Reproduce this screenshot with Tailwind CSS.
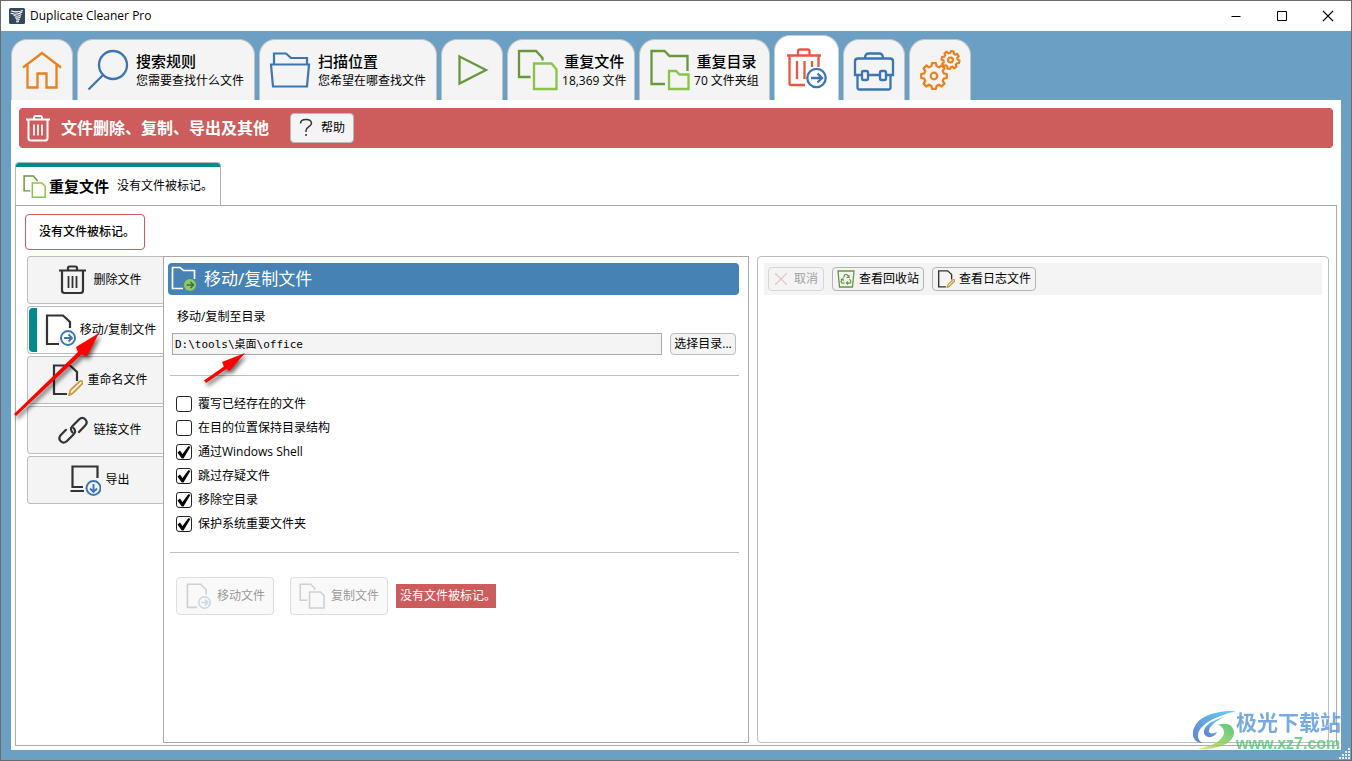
<!DOCTYPE html>
<html lang="zh-CN">
<head>
<meta charset="utf-8">
<title>Duplicate Cleaner Pro</title>
<script src="https://cdn.jsdelivr.net/npm/@tailwindcss/browser@4"></script>
</head>
<body class="font-['Open_Sans','Noto_Sans_CJK_SC',sans-serif] text-xs text-black">
<div class="relative flex min-h-screen flex-col overflow-hidden border border-[#6b6b6b] bg-[#6b9fc3]">

  <!-- Title bar -->
  <header class="flex h-[30px] items-center bg-white pl-2">
    <svg class="size-4" viewBox="0 0 16 16" fill="none" stroke="#fff" stroke-linecap="round">
      <rect width="16" height="16" rx="1.5" fill="#34495e" stroke="none"/>
      <path d="M2.500 3c2.500 1.300 8 1.200 11-.6M2 5.200c3.500 1.500 8 1.200 11-1.200M5 7.600c2.500 1 5.500.5 7-1M6.500 9.700c1.500.7 3.500.4 5-.8M7.500 11.700c1.200.5 2 .3 2.800-.3M7.500 13.700c1 .3 1.700 0 2-.5" stroke-width="1.100"/>
    </svg>
    <h1 class="ml-[5px] text-xs">Duplicate Cleaner Pro</h1>
    <div class="ml-auto flex">
      <button aria-label="最小化" class="grid h-[30px] w-[46px] place-items-center"><svg class="h-3 w-3" viewBox="0 0 12 12" stroke="#000"><path d="M1.500 6.500h9"/></svg></button>
      <button aria-label="最大化" class="grid h-[30px] w-[46px] place-items-center"><svg class="h-3 w-3" viewBox="0 0 12 12" fill="none" stroke="#000"><path d="M1.500 1.500h9v9h-9z"/></svg></button>
      <button aria-label="关闭" class="grid h-[30px] w-[46px] place-items-center"><svg class="h-3 w-3" viewBox="0 0 12 12" stroke="#000" stroke-width="1.100"><path d="M1 1l10 10M11 1L1 11"/></svg></button>
    </div>
  </header>

  <!-- Main tabs -->
  <nav class="flex h-[69px] shrink-0 items-end gap-1 px-2.5">
    <button aria-label="主页" class="grid h-[61px] w-[62px] place-items-center rounded-t-2xl border border-b-0 border-[#bfc4c8] bg-[#f4f4f4]">
      <svg class="h-10 w-10" viewBox="0 0 40 40" fill="none" stroke="#e8811e" stroke-width="2.300"><path d="M1 17.500L20 3l19 14.500M5.500 15v22.500H15.500V23.500h9v14h10V15"/></svg>
    </button>
    <button class="flex h-[61px] items-center gap-[7px] rounded-t-2xl border border-b-0 border-[#bfc4c8] bg-[#f4f4f4] pr-2.5 pl-[9px] text-left">
      <svg class="h-[42px] w-[42px]" viewBox="0 0 42 42" fill="none" stroke="#3b75b3" stroke-width="2.300"><circle cx="26" cy="16" r="14"/><path d="M16 26L1.500 40.500"/></svg>
      <span class="flex flex-col gap-0.5 pt-0.5 leading-[18px]"><b class="text-[15px] font-medium">搜索规则</b><span>您需要查找什么文件</span></span>
    </button>
    <button class="flex h-[61px] items-center gap-[7px] rounded-t-2xl border border-b-0 border-[#bfc4c8] bg-[#f4f4f4] pr-2.5 pl-[9px] text-left">
      <svg class="h-[42px] w-[42px]" viewBox="0 0 42 42" fill="none" stroke="#3b75b3" stroke-width="2.200"><path d="M2 15.500h38l-2 22H4zM5 15V4.500h12l5 4.500h16v6"/></svg>
      <span class="flex flex-col gap-0.5 pt-0.5 leading-[18px]"><b class="text-[15px] font-medium">扫描位置</b><span>您希望在哪查找文件</span></span>
    </button>
    <button aria-label="开始扫描" class="grid h-[61px] w-[62px] place-items-center rounded-t-2xl border border-b-0 border-[#bfc4c8] bg-[#f4f4f4]">
      <svg class="h-10 w-10" viewBox="0 0 40 40" fill="none" stroke="#6a963c" stroke-width="2.300"><path d="M7.500 6.500L34 20 7.500 33.500z"/></svg>
    </button>
    <button class="flex h-[61px] w-[128px] items-center gap-[3px] rounded-t-2xl border border-b-0 border-[#bfc4c8] bg-[#f4f4f4] pl-[9px] text-center">
      <svg class="h-[42px] w-[42px] shrink-0" viewBox="0 0 42 42" fill="none" stroke-width="2.300"><path stroke="#6a963c" d="M13.500 28H2V2h17l6.500 7v2.500"/><path stroke="#8bc34a" d="M17 14.500h17.500l5 6v19.500H17z"/></svg>
      <span class="flex flex-col gap-0.5 pt-0.5 leading-[18px]"><b class="text-[15px] font-medium">重复文件</b><span class="whitespace-nowrap">18,369 文件</span></span>
    </button>
    <button class="flex h-[61px] w-[131px] items-center gap-[3px] rounded-t-2xl border border-b-0 border-[#bfc4c8] bg-[#f4f4f4] pl-[9px] text-center">
      <svg class="h-[42px] w-[42px] shrink-0" viewBox="0 0 42 42" fill="none" stroke-width="2.300"><path stroke="#6a963c" d="M16 35H2.500V2h13l5 5H38.500v15"/><path stroke="#8bc34a" d="M20 22h7l3.500 3.500h9V40H20z"/></svg>
      <span class="flex flex-col gap-0.5 pt-0.5 leading-[18px]"><b class="text-[15px] font-medium">重复目录</b><span class="whitespace-nowrap">70 文件夹组</span></span>
    </button>
    <button aria-label="文件删除、复制、导出" aria-current="page" class="grid h-[65px] w-[65px] place-items-center rounded-t-2xl border border-b-0 border-[#c8ccd0] bg-white">
      <svg class="h-[42px] w-[42px]" viewBox="0 0 42 42" fill="none" stroke="#ea5741" stroke-width="2.300"><path d="M1 8.500h34M12 8V4.500c0-1.500.5-2 2-2h7.500c1.500 0 2 .5 2 2V8M3.500 9v27.500c0 1 .5 1.500 1.500 1.500h14M32.500 9v11M11 14v18M18.500 14v18M26 14v6"/><g stroke="#3b75b3"><circle cx="30.500" cy="31" r="9.200"/><path d="M25 31h10.500M31.500 26.500L36 31l-4.500 4.500"/></g></svg>
    </button>
    <button aria-label="工具箱" class="grid h-[61px] w-[62px] place-items-center rounded-t-2xl border border-b-0 border-[#bfc4c8] bg-[#f4f4f4]">
      <svg class="h-[42px] w-[42px]" viewBox="0 0 42 42" fill="none" stroke="#3b75b3" stroke-width="2.300"><path d="M9 26H2V12.500C2 10.500 3 9.500 5 9.500h32c2 0 3 1 3 3V26h-7M15 26h12M12 9c0-3 1.500-4.500 4-4.500h10c2.500 0 4 1.500 4 4.500M4.500 26v12.500c0 1.300.7 2 2 2h29c1.300 0 2-.7 2-2V26"/><rect x="9" y="22" width="6" height="9" rx="1.500"/><rect x="27" y="22" width="6" height="9" rx="1.500"/></svg>
    </button>
    <button aria-label="设置" class="grid h-[61px] w-[62px] place-items-center rounded-t-2xl border border-b-0 border-[#bfc4c8] bg-[#f4f4f4]">
      <svg class="h-[42px] w-[42px]" viewBox="0 0 42 42" fill="none" stroke="#e8811e" stroke-linejoin="round">
        <g transform="translate(15 27)" stroke-width="2.200"><path d="M9.700-2.600L12.800-2v4l-3.100.6C9.500 3.500 9 4.500 8.700 5l1.800 2.600-2.900 2.900L5 8.700C4.500 9 3.500 9.500 2.600 9.700L2 12.800h-4l-.6-3.100C-3.500 9.500-4.500 9-5 8.700l-2.600 1.800-2.900-2.900L-8.700 5C-9 4.500-9.500 3.500-9.700 2.600L-12.800 2v-4l3.100-.6C-9.500-3.500-9-4.500-8.700-5l-1.800-2.600 2.900-2.900L-5-8.700C-4.500-9-3.500-9.500-2.600-9.700L-2-12.800h4l.6 3.100C3.500-9.500 4.500-9 5-8.700l2.600-1.800 2.900 2.900L8.700-5c.3.500.8 1.500 1 2.400z"/><circle r="3.300"/></g>
        <g transform="translate(31.500 11) rotate(12) scale(.7)" stroke-width="3"><path d="M9.700-2.600L12.800-2v4l-3.100.6C9.500 3.500 9 4.500 8.700 5l1.800 2.600-2.900 2.900L5 8.700C4.500 9 3.500 9.500 2.600 9.700L2 12.800h-4l-.6-3.100C-3.500 9.500-4.500 9-5 8.700l-2.600 1.800-2.900-2.900L-8.700 5C-9 4.500-9.500 3.500-9.700 2.600L-12.800 2v-4l3.100-.6C-9.500-3.500-9-4.500-8.700-5l-1.800-2.600 2.900-2.900L-5-8.700C-4.500-9-3.500-9.500-2.600-9.700L-2-12.800h4l.6 3.100C3.500-9.500 4.500-9 5-8.700l2.600-1.800 2.900 2.900L8.700-5c.3.500.8 1.500 1 2.400z"/><circle r="3.500"/></g>
      </svg>
    </button>
  </nav>

  <main class="mx-2.5 mb-2.5 flex flex-1 flex-col bg-white px-1 pt-2 pb-1">
    <!-- Section banner -->
    <div class="mx-1 flex h-10 items-center rounded bg-[#cd5c5c] pl-1.5">
      <svg class="h-7 w-[26px]" viewBox="0 0 26 28" fill="none" stroke="#fff" stroke-width="2"><path d="M1 5.500h24M9 5V3.500c0-1 .5-1.500 1.500-1.500h5c1 0 1.500.5 1.500 1.500V5M3.500 6v18c0 1.500 1 2.500 2.500 2.500h14c1.500 0 2.500-1 2.500-2.500V6"/><path stroke-width="1.700" d="M9 10.500v11M13 10.500v11M17 10.500v11"/></svg>
      <h2 class="ml-2.5 text-base font-bold text-white">文件删除、复制、导出及其他</h2>
      <button class="ml-[21px] flex h-[30px] w-16 items-center justify-center gap-2 rounded border border-[#b9b9b9] bg-[#f4f4f4]">
        <svg class="h-5 w-3.5" viewBox="0 0 14 20" fill="none" stroke="#333" stroke-width="1.500"><path d="M1.500 5.500C1.500 2.500 4 1.500 7 1.500s5.500 1.500 5.500 4c0 3-5.500 3.500-5.500 7v1.500M7 16v2"/></svg>帮助
      </button>
    </div>

    <!-- Document tab -->
    <div class="mt-3.5 flex" role="tablist">
      <button role="tab" aria-selected="true" class="flex h-[43px] w-[206px] flex-col overflow-hidden rounded-t border border-b-0 border-[#b4b4b4]">
        <span class="h-1 w-full bg-[#008b8b]"></span>
        <span class="flex w-full flex-1 items-center pl-[7px]">
          <svg class="mr-[3px] h-[23px] w-[23px]" viewBox="0 0 42 42" fill="none" stroke-width="2.700"><path stroke="#6a963c" d="M13.500 29H2V2h17l6.500 7v2.500"/><path stroke="#8bc34a" d="M17 14.500h17.500l6 6v20H17z"/></svg>
          <b class="mr-2 text-[15px] font-bold">重复文件</b><span>没有文件被标记。</span>
        </span>
      </button>
    </div>

    <section class="flex flex-1 flex-col border border-[#a9a9a9] pt-2 pb-0.5">
      <button class="ml-[9px] h-9 w-[120px] rounded border border-[#cd5c5c] pl-1 font-medium">没有文件被标记。</button>

      <div class="mt-1.5 flex flex-1 pr-[7px] pl-[11px]">
        <!-- Action list -->
        <div class="flex w-[136px] shrink-0 flex-col gap-0.5">
          <button class="flex h-12 items-center justify-center gap-1 rounded-l border border-r-0 border-[#bdbdbd] bg-[#f4f4f4] pl-2">
            <svg class="size-8" viewBox="0 0 32 32" fill="none" stroke="#333" stroke-width="2.200"><path d="M2 6.500h27M11 6V4c0-1 .5-1.500 1.500-1.500h6c1 0 1.500.5 1.500 1.500v2M5 7v19.500c0 1.500 1 2.500 2.500 2.500h16c1.500 0 2.500-1 2.500-2.500V7"/><path stroke-width="1.800" d="M11.500 12v12M15.500 12v12M19.500 12v12"/></svg>删除文件
          </button>
          <button aria-current="true" class="flex h-12 rounded-l border border-r-0 border-[#bdbdbd] bg-white py-px pl-px">
            <span class="h-full w-2 rounded-l bg-[#008b8b]"></span>
            <span class="flex h-full flex-1 items-center justify-center gap-1">
              <svg class="size-8" viewBox="0 0 32 32" fill="none" stroke="#333" stroke-width="2.200"><path d="M15 30H3V1.500h16l7 6.500v6"/><g stroke="#3b75b3" stroke-width="1.900"><circle cx="24" cy="24" r="7"/><path d="M20 24h7.500M24.500 20.500L28 24l-3.500 3.500"/></g></svg>移动/复制文件
            </span>
          </button>
          <button class="flex h-12 items-center justify-center gap-1 rounded-l border border-r-0 border-[#bdbdbd] bg-[#f4f4f4] pl-2">
            <svg class="size-8" viewBox="0 0 32 32" fill="none" stroke="#333" stroke-width="2.200"><path d="M16 30H3V1.500h16l7 6.500v9"/><path stroke="#cf9a3d" stroke-width="1.800" d="M18 31.500l1.500-5.500 9-8.500c2-1.500 4 .5 2.500 2.500L22 29z"/></svg>重命名文件
          </button>
          <button class="flex h-12 items-center justify-center gap-1 rounded-l border border-r-0 border-[#bdbdbd] bg-[#f4f4f4] pl-2">
            <svg class="size-8" viewBox="0 0 32 32" fill="none" stroke="#333" stroke-width="2.200" stroke-linecap="round"><path d="M15.500 18.500c-2-2-2-4.500 0-6.500l6.500-6.500c2-2 4.500-2 6.200-.3s1.800 4.300 0 6.300L22 18"/><path d="M16.500 14c2 2 2 4.500 0 6.500L10 27c-2 2-4.500 2-6.200.3s-1.800-4.300 0-6.300L9 15.800"/></svg>链接文件
          </button>
          <button class="flex h-12 items-center justify-center gap-1 rounded-l border border-r-0 border-[#bdbdbd] bg-[#f4f4f4] pl-2">
            <svg class="size-8" viewBox="0 0 32 32" fill="none" stroke="#333" stroke-width="2.200"><path d="M14 23H3.500V2.500h25V14M1.500 27H15"/><g stroke="#3b75b3" stroke-width="1.900"><circle cx="24.500" cy="24" r="7"/><path d="M24.500 20V27.500M21 24.500l3.500 3.500 3.500-3.500"/></g></svg>导出
          </button>
        </div>

        <div class="grid flex-1 grid-cols-[586fr_572fr] gap-x-2">
          <!-- Move / copy panel -->
          <form class="flex flex-col border border-[#a9a9a9] pt-1.5 pr-[9px] pl-1">
            <h3 class="flex h-8 items-center rounded bg-[#4682b4] pl-[3px] text-[17px] text-white">
              <svg class="mr-[7px] h-[26px] w-[26px]" viewBox="0 0 26 26" fill="none" stroke="#fff" stroke-width="1.700"><path d="M12 22.500H1.500V1.500H9l3.500 3h11V13"/><circle cx="19" cy="19" r="6" fill="#8fc95a" stroke="none"/><path stroke="#3c6e50" stroke-width="1.500" d="M15.500 19h6.500M19.500 16l3 3-3 3"/></svg>移动/复制文件
            </h3>
            <label for="dest" class="mt-3 pl-[9px] leading-5">移动/复制至目录</label>
            <div class="mt-1.5 flex pr-[3px] pl-1">
              <input id="dest" type="text" value="D:\tools\桌面\office" readonly class="h-[22px] min-w-0 flex-1 border border-[#a9a9a9] bg-[#f4f4f4] pb-0.5 pl-0.5 font-['DejaVu_Sans_Mono','Noto_Sans_CJK_SC',monospace] text-[11px]">
              <button type="button" class="ml-2 h-[22px] w-[66px] rounded border border-[#bdbdbd] bg-[#f4f4f4] whitespace-nowrap">选择目录...</button>
            </div>
            <hr class="mt-5 ml-0.5 border-[#bdbdbd]">
            <div class="mt-4 flex flex-col pl-2">
              <label class="flex h-6 items-center gap-1.5"><span class="grid"><input type="checkbox" class="peer col-start-1 row-start-1 size-4 appearance-none rounded-[3px] border border-[#222]"></span>覆写已经存在的文件</label>
              <label class="flex h-6 items-center gap-1.5"><span class="grid"><input type="checkbox" class="peer col-start-1 row-start-1 size-4 appearance-none rounded-[3px] border border-[#222]"></span>在目的位置保持目录结构</label>
              <label class="flex h-6 items-center gap-1.5"><span class="grid"><input type="checkbox" checked class="peer col-start-1 row-start-1 size-4 appearance-none rounded-[3px] border border-[#222]"><svg class="pointer-events-none invisible col-start-1 row-start-1 size-4 peer-checked:visible" viewBox="0 0 16 16"><path d="M1.500 8.500L4 6.500l2.500 3.500 6-8 1.800 1L7.500 14.500H5.800z"/></svg></span>通过Windows Shell</label>
              <label class="flex h-6 items-center gap-1.5"><span class="grid"><input type="checkbox" checked class="peer col-start-1 row-start-1 size-4 appearance-none rounded-[3px] border border-[#222]"><svg class="pointer-events-none invisible col-start-1 row-start-1 size-4 peer-checked:visible" viewBox="0 0 16 16"><path d="M1.500 8.500L4 6.500l2.500 3.500 6-8 1.800 1L7.500 14.500H5.800z"/></svg></span>跳过存疑文件</label>
              <label class="flex h-6 items-center gap-1.5"><span class="grid"><input type="checkbox" checked class="peer col-start-1 row-start-1 size-4 appearance-none rounded-[3px] border border-[#222]"><svg class="pointer-events-none invisible col-start-1 row-start-1 size-4 peer-checked:visible" viewBox="0 0 16 16"><path d="M1.500 8.500L4 6.500l2.500 3.500 6-8 1.800 1L7.500 14.500H5.800z"/></svg></span>移除空目录</label>
              <label class="flex h-6 items-center gap-1.5"><span class="grid"><input type="checkbox" checked class="peer col-start-1 row-start-1 size-4 appearance-none rounded-[3px] border border-[#222]"><svg class="pointer-events-none invisible col-start-1 row-start-1 size-4 peer-checked:visible" viewBox="0 0 16 16"><path d="M1.500 8.500L4 6.500l2.500 3.500 6-8 1.800 1L7.500 14.500H5.800z"/></svg></span>保护系统重要文件夹</label>
            </div>
            <hr class="mt-4 ml-0.5 border-[#bdbdbd]">
            <div class="mt-6 flex items-center pl-2">
              <button type="button" disabled class="flex h-[38px] w-[98px] items-center rounded border border-[#dedede] bg-[#f9f9f9] pl-2 text-[#999]">
                <svg class="mr-1.5 h-[26px] w-[26px]" viewBox="0 0 32 32" fill="none" stroke="#d0d0d0" stroke-width="2"><path d="M15 30H3V1.500h16l7 6.500v6"/><g stroke="#cbd8e8"><circle cx="24" cy="24" r="7"/><path d="M20 24h7.500M24.500 20.500L28 24l-3.500 3.500"/></g></svg>移动文件
              </button>
              <button type="button" disabled class="ml-4 flex h-[38px] w-[98px] items-center rounded border border-[#dedede] bg-[#f9f9f9] pl-2 text-[#999]">
                <svg class="mr-1.5 h-[26px] w-[26px]" viewBox="0 0 42 42" fill="none" stroke="#d0d0d0" stroke-width="2.500"><path d="M13.500 28H2V2h17l6.500 7v2.500M17 14.500h17.500l6 6v20H17z"/></svg>复制文件
              </button>
              <span class="ml-2 flex h-6 w-[100px] items-center bg-[#cd5c5c] pl-1 whitespace-nowrap text-white">没有文件被标记。</span>
            </div>
          </form>

          <!-- Log panel -->
          <section class="rounded border border-[#bdbdbd] px-1.5 pt-1.5">
            <div class="flex h-8 items-center gap-2 bg-[#f4f4f4] pl-1">
              <button disabled class="flex h-6 w-14 items-center rounded border border-[#d6d6d6] pl-1.5 text-[#a0a0a0]">
                <svg class="mr-[7px] h-3 w-3" viewBox="0 0 12 12" stroke="#ecc4c4" stroke-width="1.300"><path d="M0 0l12 12M12 0L0 12"/></svg>取消
              </button>
              <button class="flex h-6 w-[92px] items-center rounded border border-[#b4b4b4] pl-1">
                <svg class="mr-1 h-[18px] w-[18px]" viewBox="0 0 18 18" fill="none" stroke="#6a963c" stroke-width="1.300"><path d="M1 1h16l-1.500 16h-13z"/><path stroke-width="1.200" d="M6.500 7.500L8 4.500h2l1.500 2.500M12 5v2.500H9.500M12.500 9l1.500 2.500-1 1.700h-3M11 11.500L9.500 13l1.500 1.500M7.500 13.200H5l-1-1.700L5.500 9M3.800 9.500l2-.7.7 2"/></svg>查看回收站
              </button>
              <button class="flex h-6 w-[104px] items-center rounded border border-[#b4b4b4] pl-1">
                <svg class="mr-1 h-[18px] w-[18px]" viewBox="0 0 32 32" fill="none" stroke="#333" stroke-width="2.400"><path d="M16 30H3V1.500h16l7 6.500v9"/><path stroke="#cf9a3d" stroke-width="2.200" d="M18 31.500l1.500-5.500 9-8.500c2-1.500 4 .5 2.500 2.500L22 29z"/></svg>查看日志文件
              </button>
            </div>
          </section>
        </div>
      </div>
    </section>
  </main>

  <!-- Annotation arrows -->
  <svg class="pointer-events-none absolute top-[329px] left-2.5 h-[100px] w-60 drop-shadow-[2px_3px_2px_rgba(0,0,0,0.6)]" viewBox="11 330 240 100" fill="#f00"><path d="M14 414L78 352l-2-5 23-14-12 23.500-5.500-2L16 416z"/><path d="M204 380.500L224 366.500l-2-4.500 23-9-15.500 18-3-2-20.500 14z"/></svg>

  <!-- Site watermark -->
  <div class="pointer-events-none absolute right-2.5 bottom-1.5 flex items-end opacity-80">
    <svg class="mb-1 h-10 w-11" viewBox="0 0 44 40">
      <defs><linearGradient id="wb" x1="0" y1="1" x2="1" y2="0"><stop stop-color="#3a62c0"/><stop offset="1" stop-color="#42c4f4"/></linearGradient><linearGradient id="wg" x1="0" y1="1" x2="1" y2="0"><stop stop-color="#d4e04a"/><stop offset="1" stop-color="#2fb95e"/></linearGradient></defs>
      <path fill="url(#wb)" d="M44 1C25 0 3 6 1 22c-1 7 4 11 9 11-6-4-5-12 1-17C18 9 30 5 44 1z"/>
      <path fill="url(#wb)" d="M32 7C17 11 9 19 13 25c3 4 10 2 12-3-4 2-8 2-8-1 0-5 7-10 15-14z"/>
      <path fill="url(#wg)" d="M26 15c8-3 16 0 16 8-1 10-15 17-37 16 13-2 26-8 27-16 0-4-2-7-6-8z"/>
    </svg>
    <div class="flex flex-col">
      <span class="text-[21px] leading-6 font-bold text-[#5796d8]">极光下载站</span>
      <span class="font-['Liberation_Sans',sans-serif] text-base leading-5 font-bold text-[#4fc878]">www.xz7.com</span>
    </div>
  </div>

  <!-- Resize grip -->
  <svg class="pointer-events-none absolute right-0 bottom-0 h-3 w-3" viewBox="0 0 12 12" fill="#e6eef4"><path d="M9 0h2v2H9zM6 3h2v2H6zM9 3h2v2H9zM3 6h2v2H3zM6 6h2v2H6zM9 6h2v2H9zM0 9h2v2H0zM3 9h2v2H3zM6 9h2v2H6zM9 9h2v2H9z"/></svg>
</div>
</body>
</html>
